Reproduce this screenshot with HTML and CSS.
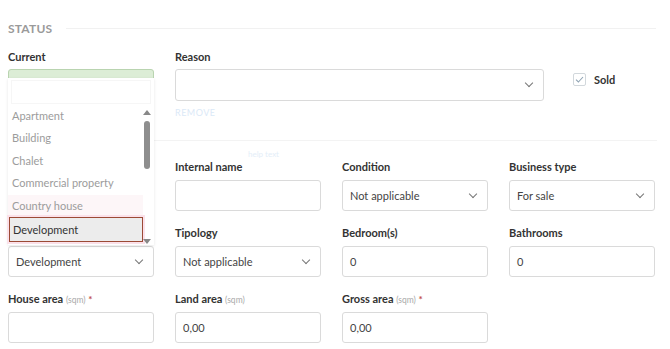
FILE: index.html
```html
<!DOCTYPE html>
<html>

<head>
    <meta name="viewport" content="width=device-width,initial-scale=1.0">
    <title>Property status</title>
    <link rel="stylesheet" href="styles.css">
</head>

<body>
    <div class="page">
        <div class="section-head">
            <span class="section-title">STATUS</span>
            <div class="section-line"></div>
        </div>

        <div class="status-row">
            <div class="field">
                <div class="label">Current</div>
                <div class="status-box"></div>
            </div>
            <div class="field reason">
                <div class="label">Reason</div>
                <div class="input select"><span class="chev"></span></div>
                <div class="faint-link">remove</div>
            </div>
            <div class="sold">
                <span class="checkbox">
                    <svg width="9" height="7" viewBox="0 0 9 7"><path d="M1 3.6 L3.4 6 L8 1" fill="none" stroke="#8fa3b3" stroke-width="1.1"/></svg>
                </span>
                <span class="sold-text">Sold</span>
            </div>
        </div>

        <div class="divider">
            <span class="faint-note">help text</span>
        </div>

        <div class="grid">
            <div class="field">
                <div class="label"></div>
                <div class="input"></div>
            </div>
            <div class="field">
                <div class="label">Internal name</div>
                <div class="input"></div>
            </div>
            <div class="field">
                <div class="label">Condition</div>
                <div class="input select">Not applicable<span class="chev"></span></div>
            </div>
            <div class="field">
                <div class="label">Business type</div>
                <div class="input select">For sale<span class="chev"></span></div>
            </div>

            <div class="field">
                <div class="label"></div>
                <div class="input select">Development<span class="chev"></span></div>
            </div>
            <div class="field">
                <div class="label">Tipology</div>
                <div class="input select">Not applicable<span class="chev"></span></div>
            </div>
            <div class="field">
                <div class="label">Bedroom(s)</div>
                <div class="input">0</div>
            </div>
            <div class="field">
                <div class="label">Bathrooms</div>
                <div class="input">0</div>
            </div>

            <div class="field">
                <div class="label">House area <span class="unit">(sqm)</span> <span class="req">*</span></div>
                <div class="input"></div>
            </div>
            <div class="field">
                <div class="label">Land area <span class="unit">(sqm)</span></div>
                <div class="input">0,00</div>
            </div>
            <div class="field">
                <div class="label">Gross area <span class="unit">(sqm)</span> <span class="req">*</span></div>
                <div class="input">0,00</div>
            </div>
        </div>

        <!-- open dropdown of the type select -->
        <div class="dropdown">
            <div class="dropdown-search"></div>
            <div class="dropdown-list">
                <div class="option">Apartment</div>
                <div class="option">Building</div>
                <div class="option">Chalet</div>
                <div class="option">Commercial property</div>
                <div class="option tinted">Country house</div>
                <div class="option active">Development</div>
                <div class="scrollbar">
                    <span class="arrow up"></span>
                    <span class="thumb"></span>
                    <span class="arrow down"></span>
                </div>
            </div>
        </div>
    </div>
</body>

</html>
```

FILE: styles.css
```css
body {
    margin: 0;
    background-color: #fff;
    font-family: Lato, "Open Sans", sans-serif;
    color: #333;
}

.page {
    position: relative;
    width: 648px;
    padding: 20px 8px 0 8px;
}

.section-head {
    display: flex;
    align-items: center;
    height: 16px;
}

.section-title {
    font-size: 12px;
    font-weight: bold;
    color: #9a9a9a;
    letter-spacing: 0.2px;
}

.section-line {
    flex: 1;
    height: 1px;
    margin-left: 14px;
    background-color: #f1f1f1;
}

.status-row {
    display: flex;
    align-items: flex-start;
    margin-top: 14px;
}

.status-row .field {
    width: 146px;
}

.status-row .reason {
    width: 369px;
    margin-left: 21px;
}

.label {
    font-size: 11px;
    font-weight: bold;
    line-height: 14px;
    height: 14px;
    margin-bottom: 6px;
    white-space: nowrap;
}

.status-row .label {
    margin-bottom: 5px;
}

.unit {
    font-size: 8.5px;
    font-weight: normal;
    color: #aaa;
}

.req {
    font-size: 10px;
    color: #c0504d;
}

.status-box {
    height: 30px;
    border: 1px solid #b9d4b0;
    border-radius: 3px;
    background-color: #dcedd6;
}

.input {
    position: relative;
    box-sizing: border-box;
    height: 31px;
    border: 1px solid #dadada;
    border-radius: 3px;
    padding: 0 7px;
    font-size: 11px;
    line-height: 29px;
    color: #444;
    background-color: #fff;
}

.status-row .input {
    height: 32px;
}

.chev {
    position: absolute;
    right: 11px;
    top: 10px;
    width: 5px;
    height: 5px;
    border-right: 1px solid #777;
    border-bottom: 1px solid #777;
    transform: rotate(45deg);
}

.faint-link {
    margin-top: 6px;
    font-size: 9px;
    color: #dbe9f7;
    text-transform: uppercase;
    letter-spacing: 0.5px;
}

.sold {
    display: flex;
    align-items: center;
    margin-left: 29px;
    margin-top: 23px;
}

.checkbox {
    box-sizing: border-box;
    width: 13px;
    height: 13px;
    border: 1px solid #d2d8dc;
    border-radius: 2px;
    display: flex;
    align-items: center;
    justify-content: center;
}

.sold-text {
    margin-left: 8px;
    font-size: 11px;
    font-weight: bold;
}

.divider {
    position: relative;
    height: 1px;
    margin-top: 22px;
    margin-right: -1px;
    background-color: #f3f3f3;
}

.faint-note {
    position: absolute;
    left: 240px;
    top: 9px;
    font-size: 8px;
    color: #e4eef8;
}

.grid {
    display: grid;
    grid-template-columns: repeat(4, 146px);
    column-gap: 21px;
    row-gap: 15px;
    margin-top: 19px;
}

.grid .input {
    height: 31px;
}

.dropdown {
    position: absolute;
    left: 8px;
    top: 78px;
    width: 146px;
    height: 167px;
    background-color: #fff;
    box-shadow: 0 1px 3px rgba(0, 0, 0, 0.1);
}

.dropdown-search {
    margin: 2px 3px 0 3px;
    height: 22px;
    border: 1px solid #f6f6f6;
    background-color: #fff;
}

.dropdown-list {
    position: relative;
    margin-top: 1px;
}

.option {
    height: 22.4px;
    line-height: 22.4px;
    padding-left: 4px;
    margin-right: 11px;
    font-size: 11px;
    color: #9c9c9c;
    white-space: nowrap;
}

.option.tinted {
    background-color: #fdf6f8;
}

.option.active {
    position: relative;
    margin-left: 1px;
    padding-left: 3px;
    height: 23px;
    line-height: 23px;
    color: #333;
    background-color: #ececec;
    border: 1px solid #9c4a35;
    box-shadow: 0 0 0 2px #fbe1ea;
}

.scrollbar {
    position: absolute;
    right: 3px;
    top: 0;
    width: 8px;
    height: 142px;
}

.arrow {
    position: absolute;
    left: 0;
    width: 0;
    height: 0;
    border-left: 4px solid transparent;
    border-right: 4px solid transparent;
}

.arrow.up {
    top: 5px;
    border-bottom: 5px solid #888;
}

.arrow.down {
    bottom: 3px;
    border-top: 5px solid #888;
}

.thumb {
    position: absolute;
    left: 1px;
    top: 16px;
    width: 6px;
    height: 48px;
    border-radius: 3px;
    background-color: #8e8e8e;
}
```
